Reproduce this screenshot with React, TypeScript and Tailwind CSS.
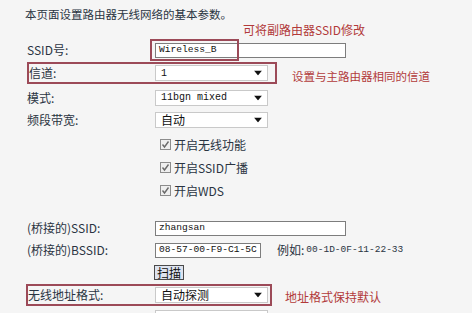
import React from "react";

const cjk = { fontFamily: '"Noto Sans CJK SC", "Noto Sans", sans-serif' };

const Arrow = () => (
  <svg width="8" height="5" viewBox="0 0 8 5" className="absolute right-[5px] top-1/2 -translate-y-1/2">
    <path d="M0 0 H8 L4 5 Z" fill="#111" />
  </svg>
);

const Select = ({ value, mono }: { value: string; mono?: boolean }) => (
  <div className="relative w-[113px] h-[16px] bg-white border border-[#c9c9c9] flex items-center pl-[5px]">
    <span
      className={mono ? "font-['Liberation_Mono'] text-[10px] text-[#111]" : "text-[12px] text-[#111]"}
    >
      {value}
    </span>
    <Arrow />
  </div>
);

const Input = ({ value, w }: { value: string; w: string }) => (
  <div className={`${w} h-[15px] bg-white border border-[#7d7d7d] flex items-center pl-[3px] overflow-hidden`}>
    <span className="font-['Liberation_Mono'] text-[9.6px] text-[#111] leading-none whitespace-nowrap">{value}</span>
  </div>
);

const Check = ({ label }: { label: string }) => (
  <div className="h-[23px] flex items-center pl-[160px]">
    <span className="w-[11px] h-[11px] border border-[#8c8c8c] bg-[#efefef] flex items-center justify-center">
      <svg width="9" height="9" viewBox="0 0 9 9">
        <path d="M1.5 4.5 L3.5 7 L7.5 1.5" stroke="#6a6a6a" strokeWidth="1.4" fill="none" />
      </svg>
    </span>
    <span className="ml-[3px] text-[12px] text-[#2a3442]">{label}</span>
  </div>
);

const Label = ({ children, w = "w-[155px] pl-[27px]" }: { children: React.ReactNode; w?: string }) => (
  <div className={`${w} text-[12px] text-[#2a3442] shrink-0 whitespace-nowrap`}>{children}</div>
);

export default function App() {
  return (
    <div style={cjk} className="w-[472px] h-[313px] bg-[#f5f5f5] overflow-hidden">
      <div className="h-[8px]" />
      <div className="h-[14px] flex items-center pl-[25px] text-[11.5px] text-[#2a3442]">
        本页面设置路由器无线网络的基本参数。
      </div>
      <div className="h-[16px] flex items-center pl-[243px] text-[12px] text-[#b23a3a]">
        可将副路由器SSID修改
      </div>

      <div className="h-[24px] flex items-center">
        <Label>SSID号:</Label>
        <div className="relative">
          <Input value="Wireless_B" w="w-[191px]" />
          <div className="absolute left-[-5px] top-[-4px] w-[89px] h-[22px] border-2 border-[#9c4a58]" />
        </div>
      </div>

      <div className="flex items-start">
        <div className="ml-[27px] w-[250px] h-[22px] border-2 border-[#9c4a58] flex items-center">
          <Label w="w-[126px]">信道:</Label>
          <Select value="1" mono />
        </div>
        <div className="ml-[15px] mt-[6px] text-[11.5px] text-[#b23a3a]">设置与主路由器相同的信道</div>
      </div>

      <div className="h-[23px] mt-[1px] flex items-center">
        <Label>模式:</Label>
        <Select value="11bgn mixed" mono />
      </div>
      <div className="h-[22px] flex items-center">
        <Label>频段带宽:</Label>
        <Select value="自动" />
      </div>

      <div className="h-[2px]" />
      <Check label="开启无线功能" />
      <Check label="开启SSID广播" />
      <Check label="开启WDS" />

      <div className="h-[15px]" />
      <div className="h-[22px] flex items-center">
        <Label>(桥接的)SSID:</Label>
        <Input value="zhangsan" w="w-[191px]" />
      </div>
      <div className="h-[22px] flex items-center">
        <Label>(桥接的)BSSID:</Label>
        <Input value="08-57-00-F9-C1-5C" w="w-[106px]" />
        <span className="ml-[16px] text-[12px] text-[#2a3442]">例如:</span>
        <span className="ml-[2px] font-['Liberation_Mono'] text-[9.5px] text-[#2a3442] whitespace-nowrap">00-1D-0F-11-22-33</span>
      </div>
      <div className="h-[23px] flex items-center pl-[154px]">
        <div className="h-[15px] px-[2px] bg-[#dde3ef] border border-[#4a4a4a] flex items-center text-[12px] text-[#111] leading-none">
          扫描
        </div>
      </div>

      <div className="flex items-start">
        <div className="ml-[26px] w-[246px] h-[22px] border-2 border-[#9c4a58] flex items-center">
          <Label w="w-[127px]">无线地址格式:</Label>
          <Select value="自动探测" />
        </div>
        <div className="ml-[13px] mt-[4px] text-[12px] text-[#b23a3a]">地址格式保持默认</div>
      </div>

      <div className="h-[23px] flex items-start pt-[4px]">
        <Label>密钥类型:</Label>
        <div className="relative w-[113px] h-[16px] bg-white border border-[#c9c9c9] flex items-center pl-[5px]">
          <span className="font-['Liberation_Mono'] text-[9.5px] text-[#111] whitespace-nowrap">WPA-PSK/WPA2-PSK</span>
        </div>
      </div>
    </div>
  );
}
